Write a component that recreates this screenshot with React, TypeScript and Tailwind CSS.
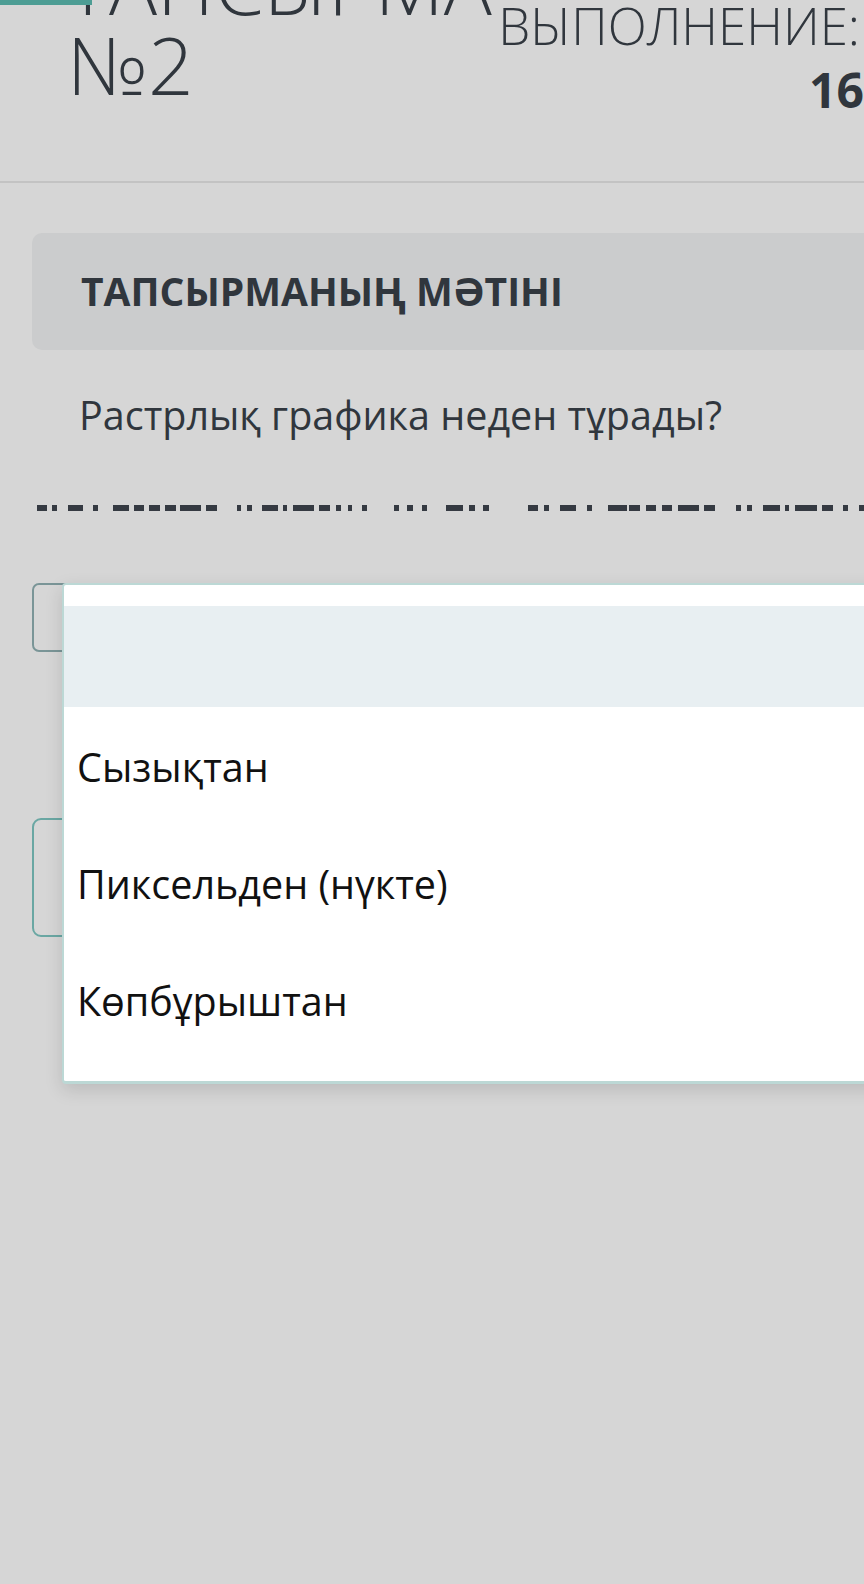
import React from 'react';

// тире-строка под вопросом: [от, до] по оси x
const dashes: [number, number][] = [
  [37, 47], [52, 57], [68, 83], [93, 98], [113, 129], [134, 144], [149, 160], [165, 176],
  [180, 201], [206, 217], [237, 241], [247, 252], [262, 278], [283, 287], [293, 314], [319, 330],
  [336, 341], [348, 352], [362, 367], [394, 399], [407, 413], [422, 427], [446, 463], [469, 475],
  [483, 489], [528, 538], [544, 549], [560, 576], [587, 592], [608, 627], [629, 640], [646, 656],
  [662, 672], [678, 699], [704, 715], [736, 741], [747, 752], [763, 780], [785, 789], [795, 817],
  [822, 833], [843, 848], [859, 864],
];

const options = ['Сызықтан', 'Пиксельден (нүкте)', 'Көпбұрыштан'];

export default function App() {
  return (
    <div
      className="relative w-[864px] h-[1584px] overflow-hidden bg-[#d6d6d6] text-[#30363d]"
      style={{ fontFamily: '"Open Sans", "Noto Sans", sans-serif' }}
    >
      <div className="absolute left-0 top-0 h-[5px] w-[92px] bg-[#4d9d94]" />

      {/* шапка */}
      <div className="flex h-[181px] items-start">
        <div className="w-[428px] pl-[67px] mt-[-56px] text-[80px] leading-[80px] font-light">
          ТАПСЫРМА №2
        </div>
        <div className="w-[438px] flex flex-col items-end">
          <div className="mt-[-5px] pr-[4px] text-[51px] leading-[60px] font-[350] whitespace-nowrap">
            ВЫПОЛНЕНИЕ:
          </div>
          <div className="mt-[6px] text-[48px] leading-[58px] font-bold">16</div>
        </div>
      </div>
      <div className="h-[2px] bg-[#c3c3c3]" />

      <div className="ml-[32px] mt-[50px] w-[900px] h-[117px] rounded-[10px] bg-[#cbcccd] flex items-center pl-[49px]">
        <span className="text-[39px] font-bold">ТАПСЫРМАНЫҢ МӘТІНІ</span>
      </div>

      <p className="ml-[79px] mt-[42px] text-[39.5px] leading-[1.2]">Растрлық графика неден тұрады?</p>

      <svg className="block mt-[66px]" width="864" height="6">
        {dashes.map(([a, b]) => (
          <rect key={a} x={a} y={0} width={b - a} height={6} fill="#353a42" />
        ))}
      </svg>

      {/* первый список с раскрытым меню */}
      <div className="relative ml-[32px] mt-[72px]">
        <div className="w-[900px] h-[69px] rounded-[7px] border-2 border-[#7a9597]" />
        <div className="absolute left-[30px] top-0 w-[820px] bg-white border-2 border-b-[3px] border-[#bcd8d5] rounded-[4px] shadow-[0_6px_18px_rgba(0,0,0,0.13)] pt-[21px] pb-[23px] z-10">
          <div className="h-[101px] bg-[#e8eff2]" />
          {options.map((o) => (
            <div key={o} className="h-[117px] flex items-center pt-[3px] pl-[13px] text-[39.5px] text-[#111]">
              {o}
            </div>
          ))}
        </div>
      </div>

      <div className="ml-[32px] mt-[166px] w-[900px] h-[119px] rounded-[9px] border-2 border-[#6aa7a3]" />
    </div>
  );
}
